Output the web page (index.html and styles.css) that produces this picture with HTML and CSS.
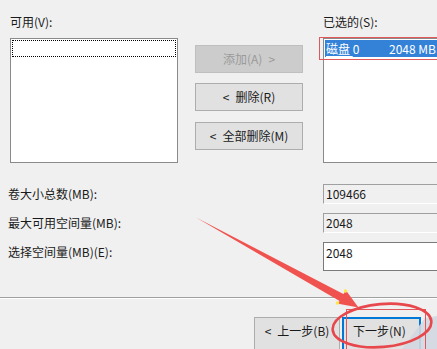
FILE: index.html
```html
<!DOCTYPE html>
<html lang="zh-CN">
<head>
<meta charset="utf-8">
<link rel="stylesheet" href="styles.css">
</head>
<body>
<div class="dialog">
  <div class="top">
    <div class="col">
      <div class="label">可用(V):</div>
      <div class="listbox"><div class="focus"></div></div>
    </div>
    <div class="mid">
      <div class="btn disabled">添加(A)<span class="gt">&gt;</span></div>
      <div class="btn"><span class="lt">&lt;</span>删除(R)</div>
      <div class="btn third"><span class="lt">&lt;</span>全部删除(M)</div>
    </div>
    <div class="col wide">
      <div class="label">已选的(S):</div>
      <div class="listbox">
        <div class="selrow"><span class="name"><u>磁盘 </u>0</span><span class="size">2048 MB</span></div>
      </div>
    </div>
  </div>
  <div class="fields">
    <div class="flabel">卷大小总数(MB):</div>
    <div class="field ro">109466</div>
    <div class="flabel">最大可用空间量(MB):</div>
    <div class="field ro">2048</div>
    <div class="flabel">选择空间量(MB)(E):</div>
    <div class="field edit">2048</div>
  </div>
  <div class="sep"></div>
  <div class="footer">
    <div class="btn back"><span class="lt">&lt;</span>上一步(B)</div>
    <div class="btn next">下一步(N)</div>
  </div>
</div>
<svg class="annot" width="437" height="349" viewBox="0 0 437 349" xmlns="http://www.w3.org/2000/svg">
  <rect x="319.5" y="37.5" width="130" height="22" fill="none" stroke="#e0575c" stroke-width="1"/>
  <polygon points="425,318 437,316 437,349 402,349" fill="#d3d8e1" opacity="0.9"/>
  <rect x="346.5" y="309.5" width="79" height="50" fill="none" stroke="#e0575c" stroke-width="1"/>
  <polygon points="196,217.5 343.4,294 346,290.5 358.5,307.5 337,303.5 339.6,301" fill="#f0534f"/>
  <circle cx="345.5" cy="291" r="1.8" fill="#ffe64a"/>
  <circle cx="337.5" cy="303" r="1.8" fill="#ffe64a"/>
  <ellipse cx="382" cy="325.5" rx="49.5" ry="21.5" transform="rotate(-5 382 325.5)" fill="none" stroke="#e8474c" stroke-width="2.6"/>
</svg>
</body>
</html>
```

FILE: styles.css
```css
html, body {
  margin: 0;
  padding: 0;
  width: 437px;
  height: 349px;
  overflow: hidden;
  background: #f0f0f0;
}

body {
  position: relative;
  font-family: "Noto Sans CJK SC", "Noto Sans", sans-serif;
  font-size: 12px;
  line-height: 16px;
  color: #1a1a1a;
}

.dialog {
  display: flex;
  flex-direction: column;
}

.top {
  display: flex;
  padding: 14px 0 0 10px;
}

.col {
  display: flex;
  flex-direction: column;
  width: 168px;
  flex: none;
}

.col.wide {
  width: 130px;
  margin-left: 20px;
}

.label {
  height: 16px;
  margin-bottom: 8px;
}

.listbox {
  box-sizing: border-box;
  height: 125px;
  background: #fff;
  border: 1px solid #8a8a8a;
  padding: 1px;
}

.focus {
  height: 15px;
  border: 1px dotted #000;
}

.selrow {
  display: flex;
  height: 17px;
  line-height: 17px;
  background: #3382d8;
  color: #fff;
  white-space: nowrap;
}

.selrow .name {
  width: 63px;
  padding-left: 1px;
}

.selrow u {
  text-decoration-thickness: 1px;
  text-underline-offset: 2px;
}

.mid {
  display: flex;
  flex-direction: column;
  gap: 10px;
  width: 108px;
  margin: 31px 0 0 17px;
  flex: none;
}

.mid .third {
  margin-top: 1px;
}

.btn {
  box-sizing: border-box;
  height: 28px;
  display: flex;
  align-items: center;
  justify-content: center;
  background: #e1e1e1;
  border: 1px solid #adadad;
  color: #1a1a1a;
  white-space: nowrap;
}

.lt {
  margin-right: 6px;
}

.gt {
  margin-left: 6px;
}

.btn.disabled {
  background: #cccccc;
  border-color: #bfbfbf;
  color: #9a9a9a;
}

.fields {
  display: grid;
  grid-template-columns: 315px 130px;
  grid-template-rows: 20px 20px 29px;
  row-gap: 9px;
  padding-left: 8px;
  margin-top: 21px;
}

.flabel {
  line-height: 20px;
  align-self: start;
}

.field {
  box-sizing: border-box;
  padding-left: 2px;
  white-space: nowrap;
}

.field.ro {
  background: #f0f0f0;
  border-top: 1px solid #a0a0a0;
  border-left: 1px solid #a0a0a0;
  border-bottom: 1px solid #ffffff;
  line-height: 18px;
}

.field.edit {
  background: #fff;
  border: 1px solid #7a7a7a;
  line-height: 20px;
}

.sep {
  margin-top: 26px;
  height: 1px;
  background: #a0a0a0;
  border-bottom: 1px solid #ffffff;
}

.footer {
  display: flex;
  gap: 2px;
  padding-left: 254px;
  margin-top: 18px;
}

.footer .btn {
  height: 34px;
  align-items: flex-start;
  padding-top: 5px;
}

.btn.back {
  width: 86px;
}

.btn.next {
  width: 79px;
  border: 2px solid #0078d7;
  padding-top: 4px;
  justify-content: flex-start;
  padding-left: 9px;
}

.annot {
  position: absolute;
  left: 0;
  top: 0;
  pointer-events: none;
}
```
